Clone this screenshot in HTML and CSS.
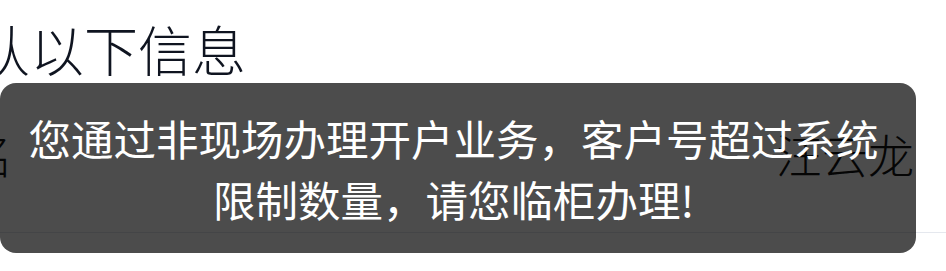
FILE: index.html
```html
<!DOCTYPE html>
<html lang="zh-CN">
<head>
    <meta charset="UTF-8">
    <title>确认信息</title>
    <link rel="stylesheet" href="styles.css">
</head>
<body>
<div class="page">
    <h1 class="title">请确认以下信息</h1>
    <div class="info-row">
        <span class="info-label">姓名</span>
        <span class="info-value">汪云龙</span>
    </div>
</div>
<div class="toast">您通过非现场办理开户业务，客户号超过系统限制数量，请您临柜办理!</div>
</body>
</html>
```

FILE: styles.css
```css
/* Reset */
html, body, div, span, h1 {
    margin: 0;
    padding: 0;
}
body {
    position: relative;
    width: 946px;
    height: 271px;
    overflow: hidden;
    background: #fff;
    font-family: "Noto Sans CJK SC", "Noto Sans", sans-serif;
}

/* Page */
.page {
    margin-left: -132px;
}
.title {
    padding-top: 13px;
    font-size: 54px;
    line-height: 72px;
    font-weight: 300;
    color: #0f1420;
    white-space: nowrap;
}
.info-row {
    display: flex;
    justify-content: space-between;
    padding: 35px 32px 46px 53px;
    font-size: 46px;
    line-height: 66px;
    font-weight: 300;
    color: #111;
    border-bottom: 1px solid #e5e8ee;
}

/* Toast */
.toast {
    position: absolute;
    left: 0;
    top: 83px;
    width: 916px;
    height: 170px;
    box-sizing: border-box;
    padding: 24px 34px 24px 25px;
    border-radius: 16px;
    background: rgba(0, 0, 0, 0.7);
    color: #fff;
    font-size: 42.5px;
    line-height: 61px;
    text-align: center;
}
```
